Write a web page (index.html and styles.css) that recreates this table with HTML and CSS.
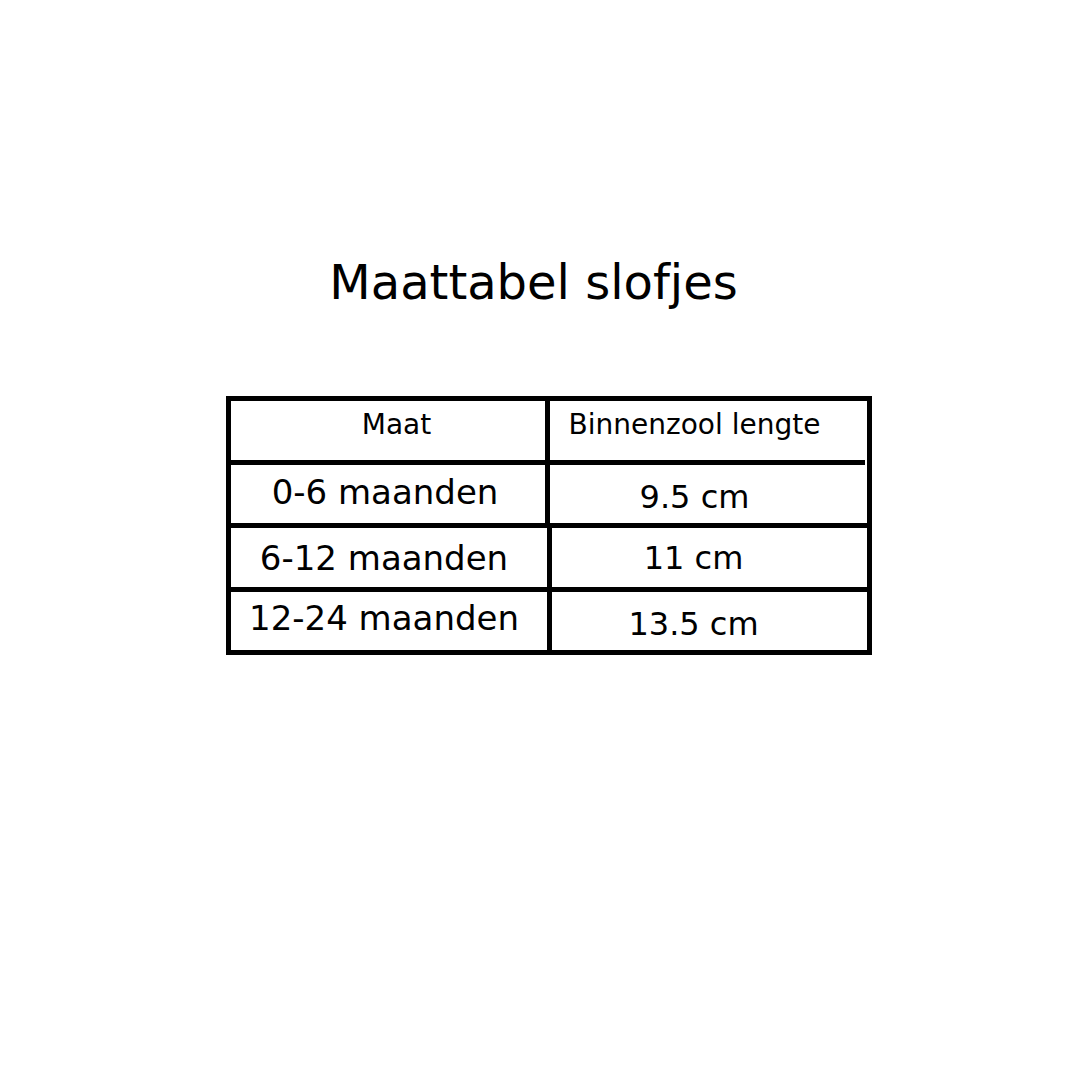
FILE: index.html
```html
<!DOCTYPE html>
<html lang="nl">
<head>
<meta charset="utf-8">
<title>Maattabel slofjes</title>
<link rel="stylesheet" href="styles.css">
</head>
<body>
<main class="page">
  <h1 class="title">Maattabel slofjes</h1>
  <div class="chart">
    <div class="block block-top">
      <div class="cell cell-left cell-head head-maat">Maat</div>
      <div class="cell cell-right cell-head head-len">Binnenzool lengte</div>
      <div class="cell cell-left row-a">0-6 maanden</div>
      <div class="cell cell-right row-a-val">9.5 cm</div>
    </div>
    <div class="block block-bottom">
      <div class="cell cell-left cell-head-row row-b">6-12 maanden</div>
      <div class="cell cell-right cell-head-row row-b-val">11 cm</div>
      <div class="cell cell-left row-c">12-24 maanden</div>
      <div class="cell cell-right row-c-val">13.5 cm</div>
    </div>
  </div>
</main>
</body>
</html>
```

FILE: styles.css
```css
html, body {
  margin: 0;
  padding: 0;
  background: #ffffff;
}

.page {
  width: 1080px;
  height: 1080px;
  padding-top: 254px;
  box-sizing: border-box;
  display: flex;
  flex-direction: column;
  align-items: flex-start;
  font-family: "DejaVu Sans", "Noto Sans", sans-serif;
  color: #000;
}

.title {
  margin: 0;
  width: 1080px;
  box-sizing: border-box;
  padding-right: 13px;
  text-align: center;
  font-size: 48px;
  font-weight: 400;
  line-height: 56px;
}

.chart {
  margin-top: 86px;
  margin-left: 226px;
  display: flex;
  flex-direction: column;
}

.block {
  display: grid;
  border: 5px solid #000;
}

.block-top {
  grid-template-columns: 319px 315px;
  grid-template-rows: 64px 58px;
}

.block-bottom {
  margin-top: -5px;
  grid-template-columns: 321px 315px;
  grid-template-rows: 64px 58px;
}

.cell {
  display: flex;
  align-items: center;
  justify-content: center;
  white-space: nowrap;
  font-size: 34px;
  line-height: 1;
}

.cell-right {
  font-size: 32px;
}

.cell-left {
  border-right: 5px solid #000;
}

.cell-head,
.cell-head-row {
  border-bottom: 5px solid #000;
}

.block-top .cell-head {
  font-size: 28px;
  padding-bottom: 12px;
}

.head-maat {
  padding-left: 17px;
}

.head-len {
  padding-right: 26px;
}

.row-a {
  padding-bottom: 4px;
  padding-right: 6px;
}

.row-b,
.row-c {
  padding-right: 10px;
}

.row-a-val {
  padding-right: 26px;
  padding-top: 6px;
}

.row-b-val,
.row-c-val {
  padding-right: 32px;
}

.row-c {
  padding-bottom: 6px;
}

.row-c-val {
  padding-top: 5px;
}
```
